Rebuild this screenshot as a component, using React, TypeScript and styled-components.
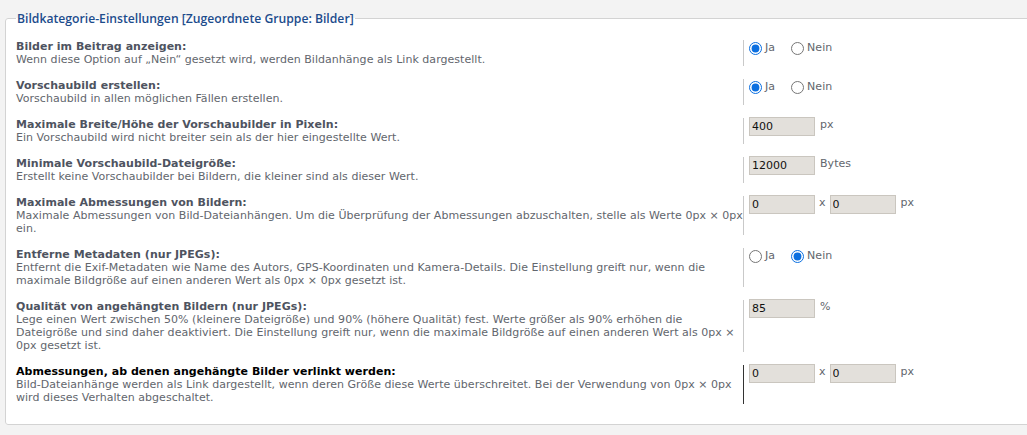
import React from "react";
import styled, { createGlobalStyle } from "styled-components";

const Global = createGlobalStyle`
  html, body { margin: 0; padding: 0; background: #f3f3f3; }
  body { font-family: Verdana, "DejaVu Sans", sans-serif; font-size: 11px; letter-spacing: 0.036px; }
`;

const Page = styled.div`
  padding: 10px 0 0 5px;
  width: 1040px;
`;

const Fieldset = styled.fieldset`
  margin: 0;
  padding: 13px 0 20px 10px;
  border: 1px solid #d3d3d3;
  border-radius: 3px;
  background: #fff;
`;

const Legend = styled.legend`
  padding: 0 1px;
  margin-left: 0;
  color: #1d4c8c;
  font-family: "Open Sans", "Noto Sans", sans-serif;
  font-size: 12.2px;
  font-weight: 600;
  letter-spacing: 0;
`;

const Row = styled.div`
  display: grid;
  grid-template-columns: 727px 1fr;
  margin-bottom: 13px;
  &:last-child { margin-bottom: 0; }
`;

const Dt = styled.div`
  line-height: 13px;
`;

const Title = styled.div<{ $active?: boolean }>`
  font-weight: bold;
  color: ${(p) => (p.$active ? "#000" : "#4e5360")};
`;

const Desc = styled.div`
  color: #62666d;
`;

const Dd = styled.div<{ $active?: boolean }>`
  border-left: 1px solid ${(p) => (p.$active ? "#333" : "#c9c9c9")};
  padding-left: 5px;
  display: flex;
  align-items: flex-start;
  gap: 4px;
  color: #62666d;
`;

const RadioLabel = styled.label`
  display: inline-flex;
  align-items: center;
  margin-right: 12px;
  line-height: 13px;
  input { margin: 2px 3px 0 0; accent-color: #0b6fe0; width: 13px; height: 13px; }
`;

const TextInput = styled.input`
  width: 60px;
  height: 17px;
  padding: 0 2px;
  border: 1px solid #cac6bf;
  background: #e3e0db;
  font-family: Verdana, "DejaVu Sans", sans-serif;
  font-size: 11px;
  color: #111;
  box-sizing: content-box;
  margin: -1px 0 0 0;
`;

const Unit = styled.span`
  margin-left: 1px;
  line-height: 13px;
`;

const Times = styled.span`
  line-height: 13px;
`;

type Item = {
  title: string;
  desc: string;
  control: React.ReactNode;
  active?: boolean;
};

const Radios = ({ yes }: { yes: boolean }) => (
  <>
    <RadioLabel>
      <input type="radio" readOnly checked={yes} />Ja
    </RadioLabel>
    <RadioLabel>
      <input type="radio" readOnly checked={!yes} />Nein
    </RadioLabel>
  </>
);

const Single = ({ v, unit }: { v: string; unit: string }) => (
  <>
    <TextInput defaultValue={v} />
    <Unit>{unit}</Unit>
  </>
);

const Double = () => (
  <>
    <TextInput defaultValue="0" />
    <Times>x</Times>
    <TextInput defaultValue="0" />
    <Unit>px</Unit>
  </>
);

const items: Item[] = [
  {
    title: "Bilder im Beitrag anzeigen:",
    desc: "Wenn diese Option auf „Nein“ gesetzt wird, werden Bildanhänge als Link dargestellt.",
    control: <Radios yes />,
  },
  {
    title: "Vorschaubild erstellen:",
    desc: "Vorschaubild in allen möglichen Fällen erstellen.",
    control: <Radios yes />,
  },
  {
    title: "Maximale Breite/Höhe der Vorschaubilder in Pixeln:",
    desc: "Ein Vorschaubild wird nicht breiter sein als der hier eingestellte Wert.",
    control: <Single v="400" unit="px" />,
  },
  {
    title: "Minimale Vorschaubild-Dateigröße:",
    desc: "Erstellt keine Vorschaubilder bei Bildern, die kleiner sind als dieser Wert.",
    control: <Single v="12000" unit="Bytes" />,
  },
  {
    title: "Maximale Abmessungen von Bildern:",
    desc: "Maximale Abmessungen von Bild-Dateianhängen. Um die Überprüfung der Abmessungen abzuschalten, stelle als Werte 0px × 0px ein.",
    control: <Double />,
  },
  {
    title: "Entferne Metadaten (nur JPEGs):",
    desc: "Entfernt die Exif-Metadaten wie Name des Autors, GPS-Koordinaten und Kamera-Details. Die Einstellung greift nur, wenn die maximale Bildgröße auf einen anderen Wert als 0px × 0px gesetzt ist.",
    control: <Radios yes={false} />,
  },
  {
    title: "Qualität von angehängten Bildern (nur JPEGs):",
    desc: "Lege einen Wert zwischen 50% (kleinere Dateigröße) und 90% (höhere Qualität) fest. Werte größer als 90% erhöhen die Dateigröße und sind daher deaktiviert. Die Einstellung greift nur, wenn die maximale Bildgröße auf einen anderen Wert als 0px × 0px gesetzt ist.",
    control: <Single v="85" unit="%" />,
  },
  {
    title: "Abmessungen, ab denen angehängte Bilder verlinkt werden:",
    desc: "Bild-Dateianhänge werden als Link dargestellt, wenn deren Größe diese Werte überschreitet. Bei der Verwendung von 0px × 0px wird dieses Verhalten abgeschaltet.",
    control: <Double />,
    active: true,
  },
];

export default function App() {
  return (
    <Page>
      <Global />
      <Fieldset>
        <Legend>Bildkategorie-Einstellungen [Zugeordnete Gruppe: Bilder]</Legend>
        {items.map((it) => (
          <Row key={it.title}>
            <Dt>
              <Title $active={it.active}>{it.title}</Title>
              <Desc>{it.desc}</Desc>
            </Dt>
            <Dd $active={it.active}>{it.control}</Dd>
          </Row>
        ))}
      </Fieldset>
    </Page>
  );
}
